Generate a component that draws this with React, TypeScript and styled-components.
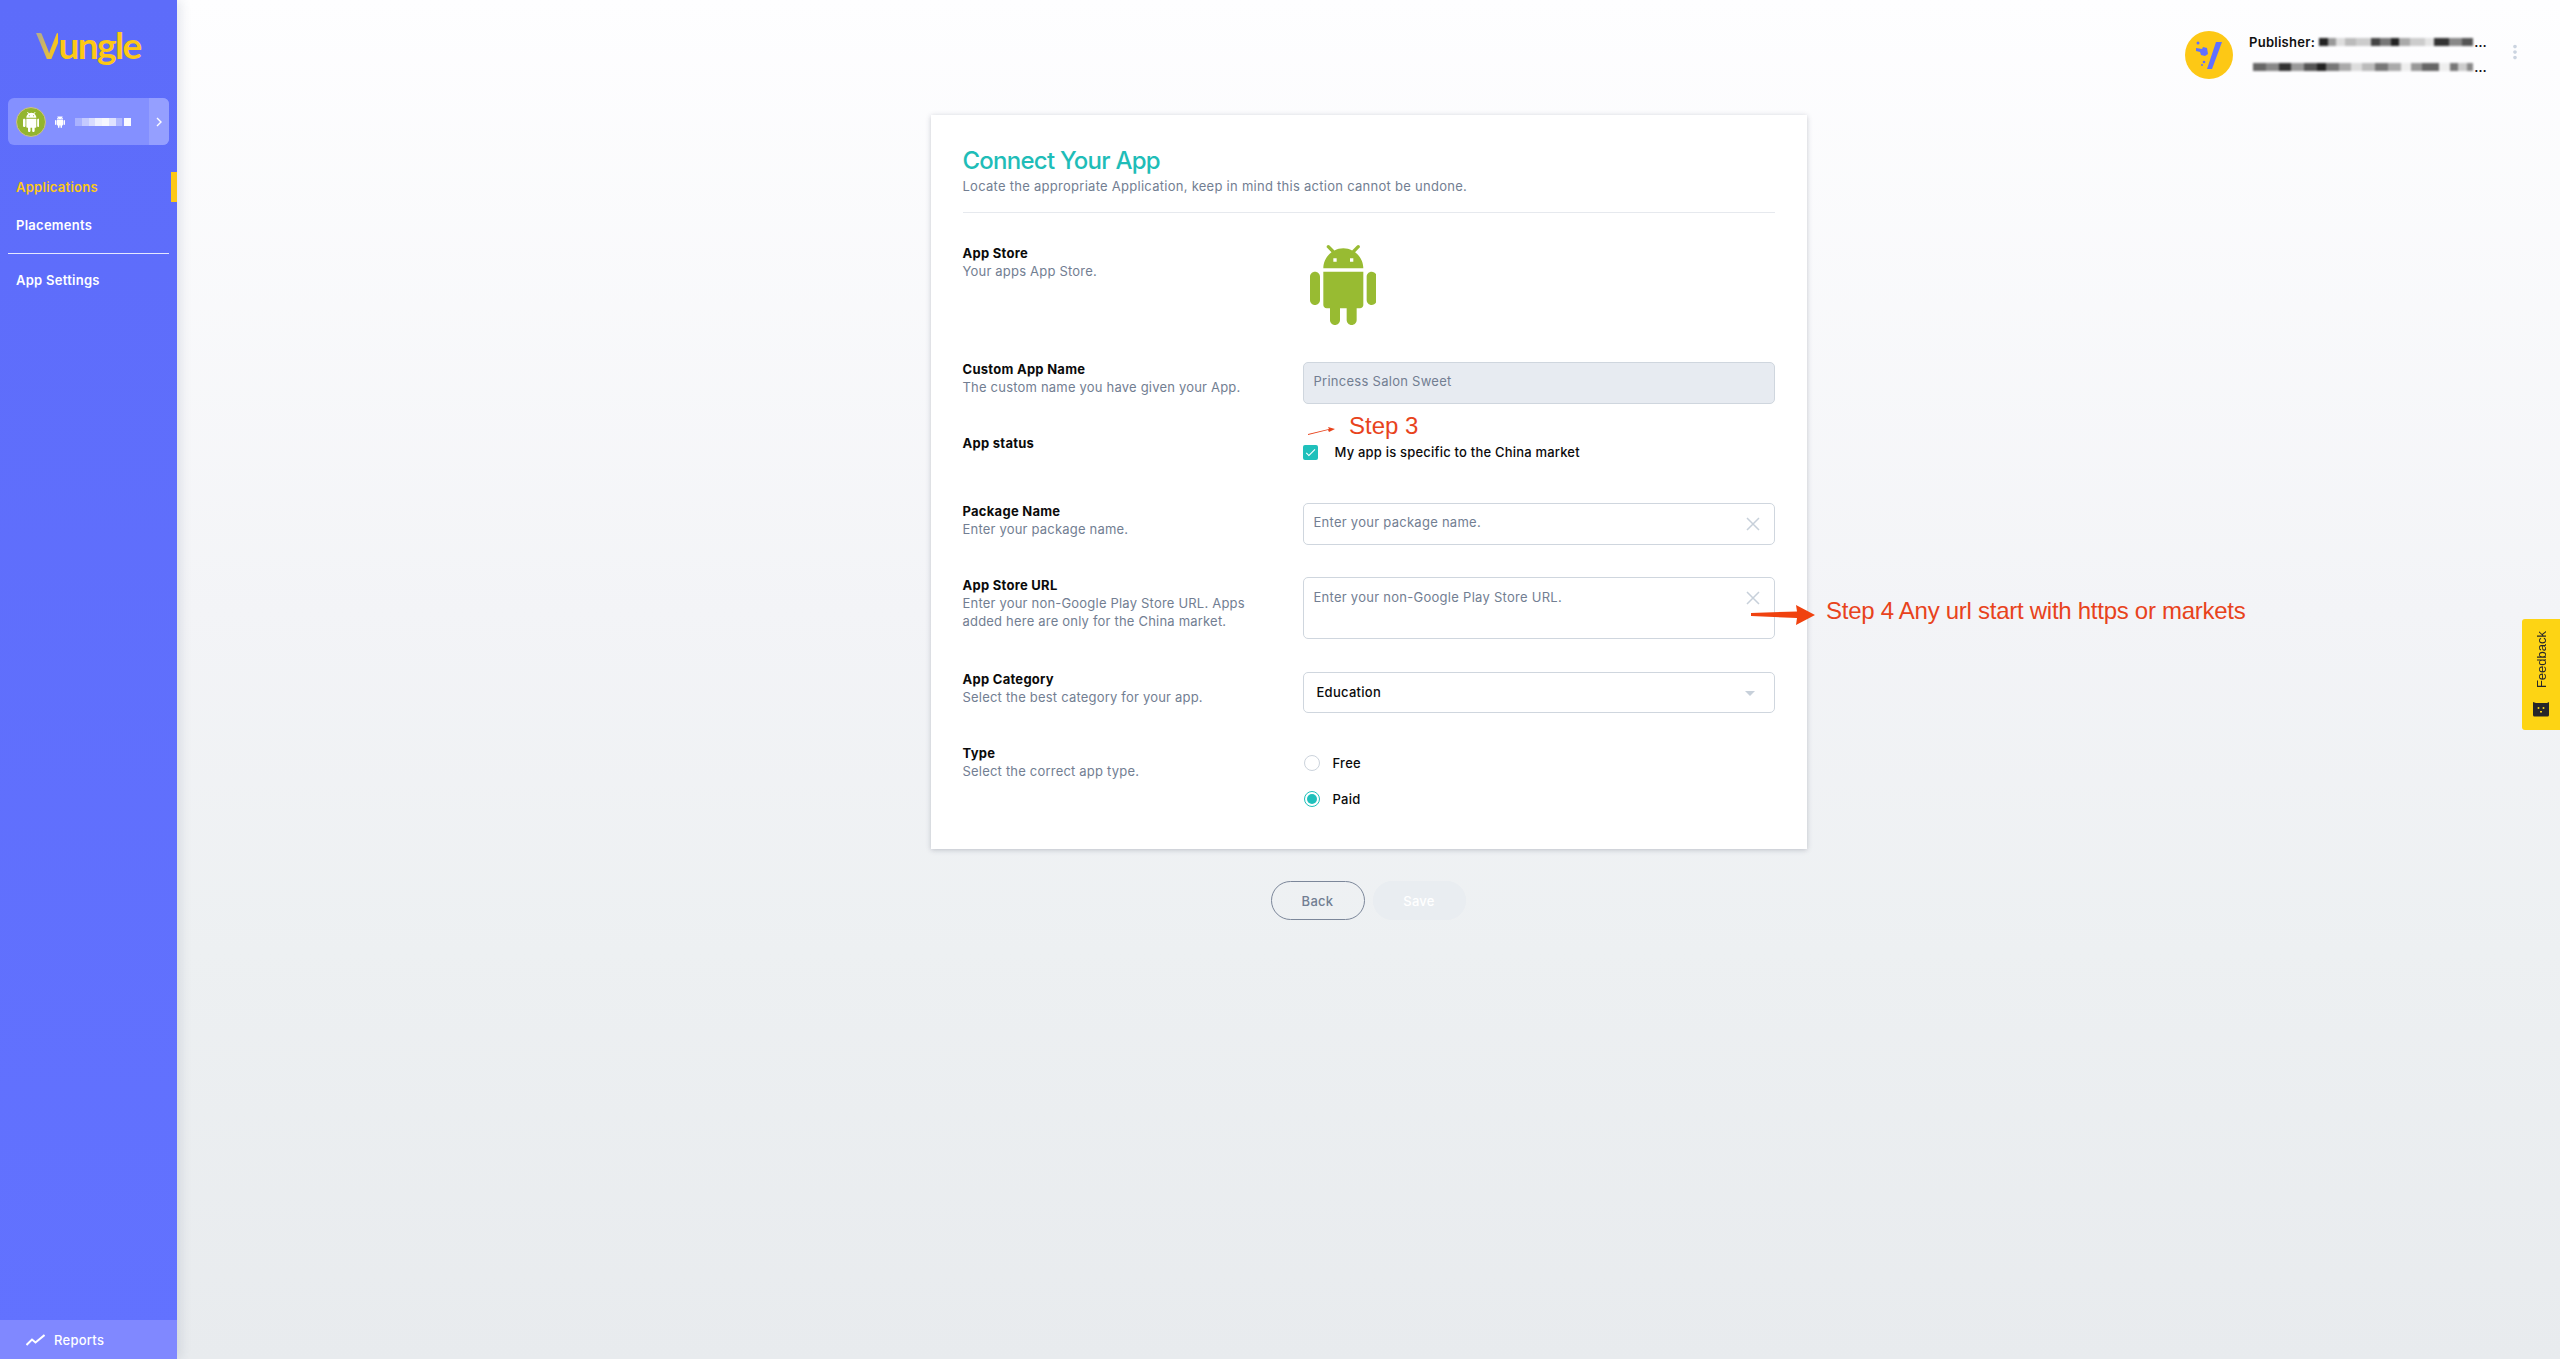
import styled, { createGlobalStyle } from 'styled-components'
import { MdCheck, MdMoreVert } from 'react-icons/md'

const GlobalStyle = createGlobalStyle`
    html, body {
        margin: 0;
        padding: 0;
        height: 100%;
    }
    * {
        box-sizing: border-box;
    }
    body {
        font-family: "Inter", "Liberation Sans", sans-serif;
        font-size: 13px;
        letter-spacing: 0.27px;
    }
`

const Page = styled.div`
    position: relative;
    display: flex;
    height: 1359px;
    overflow: hidden;
    background: linear-gradient(180deg, #fefeff 0%, #f3f4f7 45%, #edf0f2 70%, #e8ebee 100%);
`

const Sidebar = styled.aside`
    flex: 0 0 177px;
    display: flex;
    flex-direction: column;
    background: linear-gradient(180deg, #5d6cfa 0%, #6272ff 100%);
    box-shadow: 4px 0 10px rgba(60, 70, 110, 0.12);
    color: #fff;
    z-index: 1;
`

const Logo = styled.div`
    height: 98px;
    padding-top: 21px;
    text-align: center;
    font-size: 37px;
    line-height: 48px;
    font-weight: 700;
    letter-spacing: -1.6px;
    font-family: "Lato", sans-serif;
    color: #fdc815;
`

const LogoV = styled.span`
    background: linear-gradient(100deg, #b9ae83 20%, #fdc815 85%);
    -webkit-background-clip: text;
    background-clip: text;
    color: transparent;
`

const AppPicker = styled.div`
    display: flex;
    align-items: center;
    height: 47px;
    margin: 0 8px;
    padding-left: 8px;
    border-radius: 6px;
    background-color: #8490ff;
    overflow: hidden;
`

const AppAvatar = styled.div`
    flex: 0 0 30px;
    height: 30px;
    display: flex;
    align-items: center;
    justify-content: center;
    border-radius: 50%;
    background-color: #93b52f;
    border: 1px solid #cdbf8f;
`

const SmallAndroid = styled.div`
    display: flex;
    margin-left: 9px;
`

const BlurredName = styled.div`
    display: flex;
    flex: 0 0 56px;
    height: 8px;
    margin-left: 10px;
`

const NameGap = styled.div`
    flex: 1;
`

const Pixel = styled.span<{ $tone: string; $w: number }>`
    display: block;
    flex: ${p => p.$w} 1 0;
    height: 100%;
    background-color: ${p => p.$tone};
`

const PickerToggle = styled.div`
    flex: 0 0 20px;
    align-self: stretch;
    display: flex;
    align-items: center;
    justify-content: center;
    background-color: #959fff;
`

const NavList = styled.nav`
    display: flex;
    flex-direction: column;
    padding-top: 27px;
`

const NavItem = styled.a<{ $active?: boolean }>`
    position: relative;
    display: block;
    height: 38px;
    padding-left: 16px;
    line-height: 30px;
    font-weight: 600;
    font-size: 13px;
    color: ${p => (p.$active ? '#fdc815' : '#fff')};

    ${p => p.$active && `
        &::after {
            content: '';
            position: absolute;
            right: 0;
            top: 0;
            width: 6px;
            height: 30px;
            background-color: #fdc815;
        }
    `}
`

const NavDivider = styled.hr`
    height: 1px;
    margin: 5px 8px 11px;
    border: 0;
    background-color: #e5e8ff;
`

const ReportsBar = styled.div`
    display: flex;
    align-items: center;
    gap: 9px;
    height: 39px;
    margin-top: auto;
    padding-left: 26px;
    background-color: #8088ff;
    font-weight: 500;
`

const Main = styled.main`
    flex: 1;
    display: flex;
    flex-direction: column;
    align-items: center;
`

const TopBar = styled.header`
    align-self: stretch;
    display: flex;
    align-items: flex-start;
    justify-content: flex-end;
    height: 115px;
    padding: 31px 34px 0 0;
`

const PublisherAvatar = styled.div`
    width: 48px;
    height: 48px;
    border-radius: 50%;
    background-color: #fdc815;
    margin-right: 16px;
`

const PublisherInfo = styled.div`
    width: 238px;
    display: flex;
    flex-direction: column;
    gap: 7px;
    padding-top: 2px;
`

const PublisherLine = styled.div`
    display: flex;
    align-items: center;
    height: 18px;
    font-weight: 600;
    color: #111;
`

const Smudge = styled.div`
    display: flex;
    flex: 1;
    height: 8px;
    margin: 0 1px 0 4px;
    filter: blur(0.8px);
`

const MenuDots = styled.div`
    display: flex;
    margin: 10px 0 0 17px;
    color: #cbd4e0;
`

const Card = styled.section`
    width: 876px;
    height: 734px;
    padding: 30px 32px 0 32px;
    background-color: #fff;
    box-shadow: 0 1px 5px rgba(60, 70, 90, 0.28);
`

const Title = styled.h1`
    margin: 0;
    font-size: 24px;
    line-height: 32px;
    font-weight: 500;
    letter-spacing: -0.75px;
    color: #1fbdb8;
`

const Subtitle = styled.p`
    margin: 0;
    padding-bottom: 17px;
    border-bottom: 1px solid #e6e9ee;
    line-height: 18px;
    color: #727e92;
`

const FormRow = styled.div<{ $height: number; $first?: boolean }>`
    display: grid;
    grid-template-columns: 340px 472px;
    height: ${p => p.$height}px;
    margin-top: ${p => (p.$first ? '31px' : '0')};
`

const FieldLabel = styled.div`
    font-weight: 700;
    line-height: 18px;
    color: #0b0b0b;
`

const FieldHint = styled.div`
    line-height: 18px;
    letter-spacing: 0.2px;
    color: #727e92;
`

const FieldBox = styled.div<{ $offset?: number }>`
    position: relative;
    margin-top: ${p => p.$offset ?? 0}px;
`

const TextInput = styled.input`
    display: block;
    width: 100%;
    height: 42px;
    padding: 0 40px 4px 10px;
    border: 1px solid #cfd6de;
    border-radius: 5px;
    outline: none;
    background-color: #fff;
    font: inherit;
    letter-spacing: inherit;
    color: #727e92;

    &::placeholder {
        color: #727e92;
        opacity: 1;
    }

    &:disabled {
        background-color: #e7ebf1;
    }
`

const TextArea = styled.textarea`
    display: block;
    width: 100%;
    height: 62px;
    padding: 10px 40px 0 10px;
    border: 1px solid #cfd6de;
    border-radius: 5px;
    outline: none;
    resize: none;
    font: inherit;
    letter-spacing: inherit;
    line-height: 18px;

    &::placeholder {
        color: #727e92;
        opacity: 1;
    }
`

const ClearIcon = styled.svg`
    position: absolute;
    right: 14px;
    top: 13px;
`

const CheckRow = styled.label`
    display: flex;
    align-items: center;
    gap: 17px;
    letter-spacing: 0.2px;
    color: #0b0b0b;
    font-weight: 500;
`

const CheckBox = styled.span`
    flex: 0 0 15px;
    height: 15px;
    display: flex;
    align-items: center;
    justify-content: center;
    border-radius: 2px;
    background-color: #1fc0bb;
    color: #fff;
`

const SelectBox = styled.div`
    position: relative;
    display: flex;
    align-items: center;
    height: 41px;
    padding: 0 0 1px 13px;
    border: 1px solid #cfd6de;
    border-radius: 5px;
    font-weight: 500;
    color: #0b0b0b;

    &::after {
        content: '';
        position: absolute;
        right: 19px;
        top: 18px;
        border-left: 5px solid transparent;
        border-right: 5px solid transparent;
        border-top: 5px solid #c7d0da;
    }
`

const RadioGroup = styled.div`
    display: flex;
    flex-direction: column;
    gap: 20px;
    padding-left: 1px;
`

const RadioRow = styled.label`
    display: flex;
    align-items: center;
    gap: 13px;
    height: 16px;
    font-weight: 500;
    color: #0b0b0b;
`

const RadioDot = styled.span<{ $checked?: boolean }>`
    flex: 0 0 16px;
    height: 16px;
    border-radius: 50%;
    border: 1px solid ${p => (p.$checked ? '#1fc0bb' : '#ccd3dc')};
    padding: 2px;
    background-clip: content-box;
    background-color: ${p => (p.$checked ? '#1fc0bb' : 'transparent')};
`

const ButtonRow = styled.div`
    display: flex;
    gap: 8px;
    margin-top: 32px;
    margin-right: 1px;
`

const PillButton = styled.button<{ $disabled?: boolean }>`
    width: ${p => (p.$disabled ? '93px' : '94px')};
    height: 39px;
    border-radius: 20px;
    border: 1px solid ${p => (p.$disabled ? '#e9edf1' : '#7c879a')};
    background-color: ${p => (p.$disabled ? '#e9edf1' : 'transparent')};
    color: ${p => (p.$disabled ? '#fff' : '#727e92')};
    font: inherit;
    letter-spacing: inherit;
    font-weight: 500;
`

const StepNote = styled.div<{ $x: number; $y: number; $tight?: boolean }>`
    position: absolute;
    left: ${p => p.$x}px;
    top: ${p => p.$y}px;
    font-family: "Liberation Sans", sans-serif;
    font-size: 24px;
    line-height: 28px;
    letter-spacing: ${p => (p.$tight ? '-0.27px' : '0')};
    color: #e8431c;
    white-space: nowrap;
`

const ArrowMark = styled.svg<{ $x: number; $y: number }>`
    position: absolute;
    left: ${p => p.$x}px;
    top: ${p => p.$y}px;
`

const FeedbackTab = styled.div`
    position: absolute;
    right: 0;
    top: 619px;
    width: 38px;
    height: 111px;
    display: flex;
    flex-direction: column;
    align-items: center;
    justify-content: space-between;
    padding: 12px 0 13px;
    border-radius: 3px 0 0 3px;
    background-color: #fdd414;
    color: #26262a;
`

const FeedbackText = styled.span`
    writing-mode: vertical-rl;
    transform: rotate(180deg);
    font-family: "Liberation Sans", sans-serif;
    font-size: 13px;
    line-height: 13px;
    letter-spacing: 0;
`

const LargeAndroidWrap = styled.div`
    display: flex;
    padding-left: 7px;
`

const androidPath = 'M6 18c0 .55.45 1 1 1h1v3.5c0 .83.67 1.5 1.5 1.5s1.5-.67 1.5-1.5V19h2v3.5c0 .83.67 1.5 1.5 1.5s1.5-.67 1.5-1.5V19h1c.55 0 1-.45 1-1V8H6v10zM3.5 8C2.67 8 2 8.67 2 9.5v7c0 .83.67 1.5 1.5 1.5S5 17.33 5 16.5v-7C5 8.67 4.33 8 3.5 8zm17 0c-.83 0-1.5.67-1.5 1.5v7c0 .83.67 1.5 1.5 1.5s1.5-.67 1.5-1.5v-7c0-.83-.67-1.5-1.5-1.5zm-4.97-5.84l1.3-1.3c.2-.2.2-.51 0-.71-.2-.2-.51-.2-.71 0l-1.48 1.48C13.85 1.23 12.95 1 12 1c-.96 0-1.86.23-2.66.63L7.85.15c-.2-.2-.51-.2-.71 0-.2.2-.2.51 0 .71l1.31 1.31C6.97 3.26 6 5.01 6 7h12c0-1.99-.97-3.75-2.47-4.84zM10 5H9V4h1v1zm5 0h-1V4h1v1z'

const AndroidIcon = ({ height, color }: { height: number; color: string }) => (
    <svg width={(height * 20) / 24} height={height} viewBox="2 0 20 24" fill={color}>
        <path d={androidPath} />
    </svg>
)

const CrossIcon = () => (
    <ClearIcon width="16" height="16" viewBox="0 0 16 16" stroke="#c7d0da" strokeWidth="1.5">
        <path d="M2 2l12 12M14 2L2 14" />
    </ClearIcon>
)

const nameBlocks = [
    ['#a9b2ff', 8], ['#c4caff', 8], ['#d8dcff', 8], ['#eef0ff', 8], ['#f6f7ff', 8], ['#dfe2ff', 8],
    ['#b0b8ff', 8], ['#8f9aff', 2], ['#f9f9ff', 8],
] as [string, number][]

const publisherBlocks = [
    ['#222', 8], ['#999', 8], ['#ddd', 8], ['#bbb', 10], ['#ccc', 14], ['#444', 8], ['#777', 10], ['#222', 8],
    ['#aaa', 10], ['#ccc', 14], ['#e4e4e4', 8], ['#333', 14], ['#888', 12], ['#555', 10],
] as [string, number][]

const emailBlocks = [
    ['#666', 12], ['#888', 12], ['#333', 12], ['#999', 12], ['#555', 12], ['#222', 8], ['#777', 12], ['#aaa', 12],
    ['#ddd', 10], ['#bbb', 12], ['#777', 12], ['#aaa', 12], ['#eee', 10], ['#999', 10], ['#666', 16], ['#eee', 10],
    ['#777', 8], ['#ccc', 8], ['#888', 6],
] as [string, number][]

const Blocks = ({ items }: { items: [string, number][] }) => (
    <>
        {items.map(([tone, w], i) => (
            <Pixel key={i} $tone={tone} $w={w} />
        ))}
    </>
)

const App = () => {
    return (
        <Page>
            <GlobalStyle />
            <Sidebar>
                <Logo><LogoV>V</LogoV>ungle</Logo>
                <AppPicker>
                    <AppAvatar><AndroidIcon height={20} color="#fff" /></AppAvatar>
                    <SmallAndroid><AndroidIcon height={12} color="#fff" /></SmallAndroid>
                    <BlurredName><Blocks items={nameBlocks} /></BlurredName>
                    <NameGap />
                    <PickerToggle>
                        <svg width="8" height="10" viewBox="0 0 8 10" fill="none" stroke="#fff" strokeWidth="1.4">
                            <path d="M2 1l4 4-4 4" />
                        </svg>
                    </PickerToggle>
                </AppPicker>
                <NavList>
                    <NavItem $active>Applications</NavItem>
                    <NavItem>Placements</NavItem>
                    <NavDivider />
                    <NavItem>App Settings</NavItem>
                </NavList>
                <ReportsBar>
                    <svg width="19" height="12" viewBox="0 0 19 12" fill="none" stroke="#fff" strokeWidth="2">
                        <path d="M0.5 11l5.5-5.5 3.5 3L18.5 1" />
                    </svg>
                    Reports
                </ReportsBar>
            </Sidebar>

            <Main>
                <TopBar>
                    <PublisherAvatar>
                        <svg width="48" height="48" viewBox="0 0 48 48" fill="#6070ff">
                            <path d="M31 11h6l-10 27h-5z" />
                            <path d="M11 17l6 1 1-2 4 1 1 6-3 2-4-1-1-3-4-1z" />
                            <circle cx="13" cy="12" r="1.5" />
                            <circle cx="19" cy="31" r="1.3" />
                            <circle cx="17" cy="34" r="1" />
                        </svg>
                    </PublisherAvatar>
                    <PublisherInfo>
                        <PublisherLine>Publisher:<Smudge><Blocks items={publisherBlocks} /></Smudge>…</PublisherLine>
                        <PublisherLine><Smudge><Blocks items={emailBlocks} /></Smudge>…</PublisherLine>
                    </PublisherInfo>
                    <MenuDots><MdMoreVert size={22} /></MenuDots>
                </TopBar>

                <Card>
                    <Title>Connect Your App</Title>
                    <Subtitle>Locate the appropriate Application, keep in mind this action cannot be undone.</Subtitle>

                    <FormRow $first $height={116}>
                        <div>
                            <FieldLabel>App Store</FieldLabel>
                            <FieldHint>Your apps App Store.</FieldHint>
                        </div>
                        <FieldBox $offset={1}>
                            <LargeAndroidWrap>
                                <AndroidIcon height={80} color="#98bb32" />
                            </LargeAndroidWrap>
                        </FieldBox>
                    </FormRow>

                    <FormRow $height={74}>
                        <div>
                            <FieldLabel>Custom App Name</FieldLabel>
                            <FieldHint>The custom name you have given your App.</FieldHint>
                        </div>
                        <FieldBox $offset={2}>
                            <TextInput disabled value="Princess Salon Sweet" readOnly />
                        </FieldBox>
                    </FormRow>

                    <FormRow $height={68}>
                        <FieldLabel>App status</FieldLabel>
                        <FieldBox $offset={10}>
                            <CheckRow>
                                <CheckBox><MdCheck size={13} /></CheckBox>
                                My app is specific to the China market
                            </CheckRow>
                        </FieldBox>
                    </FormRow>

                    <FormRow $height={74}>
                        <div>
                            <FieldLabel>Package Name</FieldLabel>
                            <FieldHint>Enter your package name.</FieldHint>
                        </div>
                        <FieldBox $offset={1}>
                            <TextInput placeholder="Enter your package name." readOnly />
                            <CrossIcon />
                        </FieldBox>
                    </FormRow>

                    <FormRow $height={94}>
                        <div>
                            <FieldLabel>App Store URL</FieldLabel>
                            <FieldHint>Enter your non-Google Play Store URL. Apps<br />added here are only for the China market.</FieldHint>
                        </div>
                        <FieldBox $offset={1}>
                            <TextArea placeholder="Enter your non-Google Play Store URL." readOnly />
                            <CrossIcon />
                        </FieldBox>
                    </FormRow>

                    <FormRow $height={74}>
                        <div>
                            <FieldLabel>App Category</FieldLabel>
                            <FieldHint>Select the best category for your app.</FieldHint>
                        </div>
                        <FieldBox $offset={2}>
                            <SelectBox>Education</SelectBox>
                        </FieldBox>
                    </FormRow>

                    <FormRow $height={100}>
                        <div>
                            <FieldLabel>Type</FieldLabel>
                            <FieldHint>Select the correct app type.</FieldHint>
                        </div>
                        <FieldBox $offset={11}>
                            <RadioGroup>
                                <RadioRow><RadioDot />Free</RadioRow>
                                <RadioRow><RadioDot $checked />Paid</RadioRow>
                            </RadioGroup>
                        </FieldBox>
                    </FormRow>
                </Card>

                <ButtonRow>
                    <PillButton>Back</PillButton>
                    <PillButton $disabled>Save</PillButton>
                </ButtonRow>
            </Main>

            <StepNote $x={1349} $y={412}>Step 3</StepNote>
            <ArrowMark $x={1307} $y={424} width="30" height="12" viewBox="0 0 30 12">
                <path d="M1 10L22 5l-1-2 7 2-6 3-1-2L1 11z" fill="#e8431c" />
            </ArrowMark>

            <StepNote $x={1826} $y={597} $tight>Step 4 Any url start with https or markets</StepNote>
            <ArrowMark $x={1750} $y={604} width="66" height="22" viewBox="0 0 66 22">
                <path d="M1 9L47 7.5 46 1l19 10-19 10 1-7L1 12z" fill="#f0420f" />
            </ArrowMark>

            <FeedbackTab>
                <FeedbackText>Feedback</FeedbackText>
                <svg width="18" height="16" viewBox="0 0 18 16">
                    <path d="M1 1l3 1h11l2-1v13a1.5 1.5 0 0 1-1.5 1.5h-13A1.5 1.5 0 0 1 1 14z" fill="#26262a" />
                    <circle cx="6.5" cy="7" r="1" fill="#fdd414" />
                    <circle cx="11.5" cy="7" r="1" fill="#fdd414" />
                    <path d="M8 10h2v1.5H8z" fill="#fdd414" />
                </svg>
            </FeedbackTab>
        </Page>
    )
}

export default App
